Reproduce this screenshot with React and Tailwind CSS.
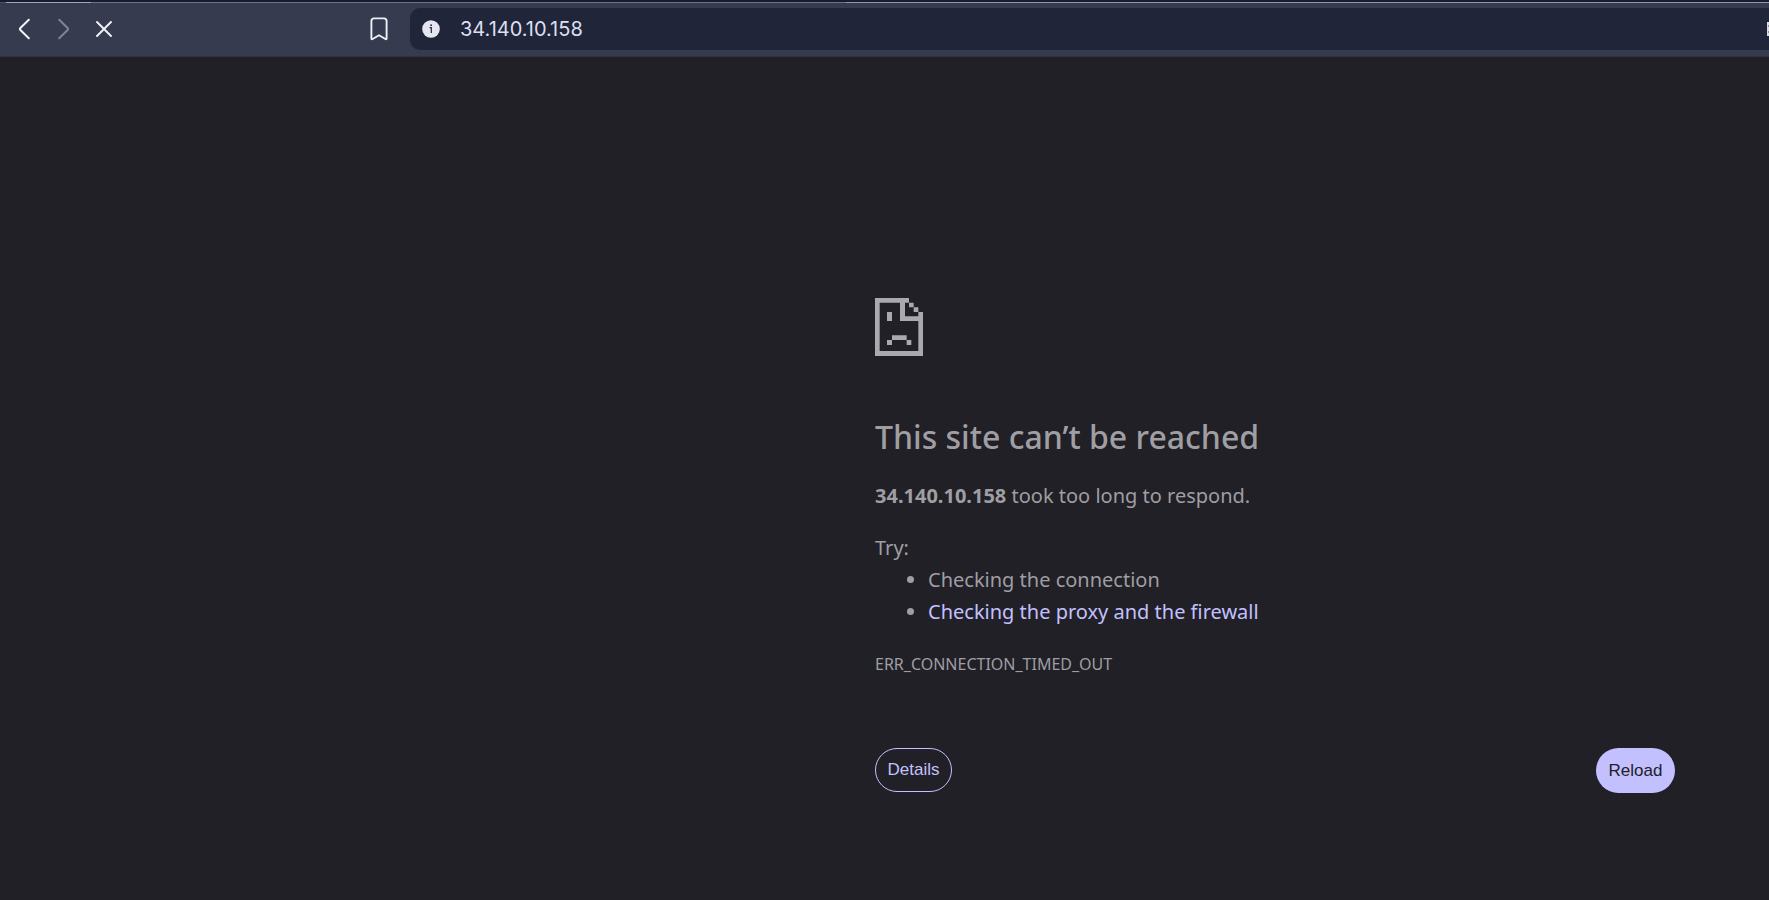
function ChevronIcon({ flip }) {
  return (
    <svg viewBox="0 0 12 22" className="h-[22px] w-3" fill="none" stroke="currentColor" strokeWidth="2" strokeLinecap="round" strokeLinejoin="round" aria-hidden="true">
      <path d={flip ? "M1.2 1.8L9.6 10Q10.6 11 9.6 12L1.2 20.2" : "M10.8 1.8L2.4 10Q1.4 11 2.4 12L10.8 20.2"} />
    </svg>
  );
}

function Toolbar() {
  return (
    <header className="flex h-[57px] shrink-0 flex-col bg-[#363b4f]">
      <div className="h-[2px] bg-[#171c33]" />
      <div className="flex h-px">
        <div className="w-[6px] bg-[#4b4f60]" />
        <div className="w-[85px] bg-[#a3a4ae]" />
        <div className="w-[755px] bg-[#71747f]" />
        <div className="flex-1 bg-[#9698a3]" />
      </div>
      <div className="flex flex-1 items-center border-b border-[#303442] pb-[2px] pl-[18px]">
        <nav className="flex items-center gap-7 text-[#f2f3fa]" aria-label="Navigation">
          <button type="button" aria-label="Back">
            <ChevronIcon />
          </button>
          <button type="button" aria-label="Forward" className="text-[#81848f]" disabled>
            <ChevronIcon flip />
          </button>
          <button type="button" aria-label="Stop loading" className="-ml-[3px]">
            <svg viewBox="0 0 18 18" className="size-[18px]" fill="none" stroke="currentColor" strokeWidth="1.9" strokeLinecap="round" aria-hidden="true">
              <path d="M2 2L16 16M16 2L2 16" />
            </svg>
          </button>
        </nav>
        <button type="button" aria-label="Bookmark" className="ml-[257px] text-[#edf0f4]">
          <svg viewBox="0 0 18 24" className="h-6 w-[18px]" fill="none" stroke="currentColor" strokeWidth="1.9" strokeLinejoin="round" aria-hidden="true">
            <path d="M1.4 21.4V4Q1.4 1.4 4 1.4H14Q16.6 1.4 16.6 4V21.4Q16.6 22.7 15.4 22L9 18.2L2.6 22Q1.4 22.7 1.4 21.4Z" />
          </svg>
        </button>
        <div className="ml-[22px] flex h-[42px] min-w-0 flex-1 items-center overflow-hidden rounded-l-[10px] bg-[#202539] pl-3">
          <button type="button" aria-label="Site information" className="shrink-0">
            <svg viewBox="0 0 18 18" className="size-[18px]" aria-hidden="true">
              <circle cx="9" cy="9" r="8.8" fill="#e6e5f2" />
              <path d="M7.6 7.6H9.3V13" fill="none" stroke="#202539" strokeWidth="1.2" />
              <circle cx="9.1" cy="5.2" r="0.9" fill="#202539" />
            </svg>
          </button>
          <input
            type="text"
            aria-label="Address"
            defaultValue="34.140.10.158"
            className="ml-5 min-w-0 flex-1 bg-transparent font-['Inter',sans-serif] text-[20px] text-[#dcdff0] outline-none"
          />
          <svg viewBox="0 0 2 14" className="h-[14px] w-[2px] shrink-0" aria-hidden="true">
            <path d="M0 0H2V14H0Z" fill="#d9dae2" />
            <path d="M1 3H2V5H1ZM1 9H2V11H1Z" fill="#8d909c" />
          </svg>
        </div>
      </div>
    </header>
  );
}

function SadPageIcon() {
  return (
    <svg viewBox="0 0 144 174" className="h-[58px] w-12" fill="#aaa9ae" aria-hidden="true">
      <path d="M0 0H102V14H90V55H130V42H144V174H0ZM14 14V159H130V69H75V14Z" fillRule="evenodd" />
      <path d="M102 14H116V28H102ZM116 28H130V42H116ZM36 42H51V69H36ZM51 112H95V126H51ZM36 126H51V141H36ZM95 126H109V141H95Z" />
    </svg>
  );
}

export default function App() {
  return (
    <div className="flex min-h-screen flex-col bg-[#212026] font-['Noto_Sans',sans-serif] text-[20px] leading-8 text-[#9f9ea3]">
      <Toolbar />
      <main className="mr-[94px] ml-auto w-full max-w-[800px] pt-[241px]">
        <SadPageIcon />
        <h1 className="mt-[61px] text-[32px] leading-[40px] font-medium">This site can’t be reached</h1>
        <p className="mt-[23px]">
          <strong className="font-bold">34.140.10.158</strong> took too long to respond.
        </p>
        <p className="mt-5">Try:</p>
        <ul className="list-disc pl-[53px]">
          <li>Checking the connection</li>
          <li>
            <a href="#buttons" className="text-[#c3c0ff]">Checking the proxy and the firewall</a>
          </li>
        </ul>
        <p className="mt-5 text-[16px]">ERR_CONNECTION_TIMED_OUT</p>
        <div id="buttons" className="mt-[68px] flex items-start justify-between font-['Liberation_Sans',sans-serif] text-[17px] leading-5">
          <button type="button" className="h-11 min-w-[77px] rounded-full border border-[#c3c0ff] px-[11px] text-[#c3c0ff]">Details</button>
          <button type="button" className="h-[45px] min-w-[79px] rounded-full bg-[#c3c0ff] px-3 text-[#212026]">Reload</button>
        </div>
      </main>
    </div>
  );
}
